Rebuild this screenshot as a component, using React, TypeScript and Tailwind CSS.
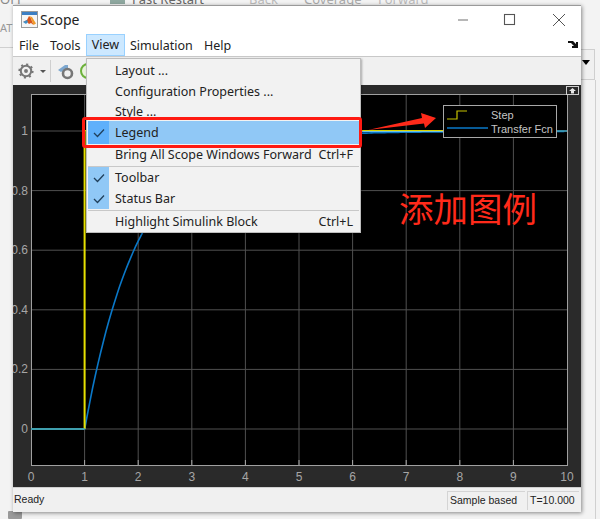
import React from "react";

const ui = { fontFamily: '"Noto Sans", "Liberation Sans", sans-serif' };
const arial = { fontFamily: '"Liberation Sans", Arial, sans-serif' };

function MatlabLogo() {
  return (
    <svg width="17" height="17" viewBox="0 0 17 17" className="block">
      <rect x="0.5" y="0.5" width="16" height="16" fill="#f6f6f6" stroke="#9a9a9a" />
      <rect x="1" y="1" width="15" height="3" fill="#3c7fc4" />
      <path d="M2 11 L6 9 L8 5 L10 7.5 L12.5 14 L10 12 L8 13 L6 11 Z" fill="#d9541e" />
      <path d="M8 5 L10 7.5 L12.5 14 L15 12.5 L11 6 Z" fill="#f09a2a" />
      <path d="M2 11 L6 9 L7 11 L5 13 Z" fill="#3f8fc7" />
    </svg>
  );
}

function Gear({ size = 18, color = "#777" }: { size?: number; color?: string }) {
  return (
    <svg width={size} height={size} viewBox="0 0 20 20" className="block">
      <circle cx="10" cy="10" r="6.5" fill="none" stroke={color} strokeWidth="2.5" />
      <circle cx="10" cy="10" r="8.3" fill="none" stroke={color} strokeWidth="2.4" strokeDasharray="2.6 3.9" />
      <circle cx="10" cy="10" r="2.4" fill={color} />
    </svg>
  );
}

function Check() {
  return (
    <svg width="12" height="10" viewBox="0 0 12 10" className="block">
      <path d="M1 5 L4.5 8.5 L11 1.5" fill="none" stroke="#20405c" strokeWidth="1.3" />
    </svg>
  );
}

function MenuItem({
  label,
  shortcut,
  checked,
  active,
  h = 21,
}: {
  label: string;
  shortcut?: string;
  checked?: boolean;
  active?: boolean;
  h?: number;
}) {
  return (
    <div className={`flex items-center ${active ? "bg-[#90c8f6]" : ""}`} style={{ height: h }}>
      <div
        className={`w-[21px] h-full shrink-0 flex items-center justify-center ${
          active ? "bg-[#5fb0fb]" : checked ? "bg-[#90c8f6]" : ""
        }`}
      >
        {checked && <Check />}
      </div>
      <div className="ml-[6px] pt-[2px] flex-1 text-[12.5px] leading-none text-[#222] whitespace-nowrap">{label}</div>
      {shortcut && <div className="mr-[6px] pt-[2px] text-[12.5px] leading-none text-[#222] whitespace-nowrap">{shortcut}</div>}
    </div>
  );
}

function Separator({ h }: { h: number }) {
  return (
    <div className="flex items-center" style={{ height: h }}>
      <div className="h-px w-full bg-[#c8c8c8]" />
    </div>
  );
}

function Chart() {
  const X = (t: number) => 18 + t * 53.6;
  const Y = (v: number) => 344 - v * 298;
  const xs = [1, 2, 3, 4, 5, 6, 7, 8, 9];
  const ys = [0, 0.2, 0.4, 0.6, 0.8, 1];
  const curve: string[] = [];
  for (let t = 1; t <= 10; t += 0.05) {
    curve.push(`${X(t).toFixed(1)},${(Y(1 - Math.exp(-(t - 1))) + 0.5).toFixed(1)}`);
  }
  return (
    <svg width="568" height="402" viewBox="0 0 568 402" className="block" style={arial}>
      <rect x="18" y="9" width="536" height="371" fill="#000" />
      {xs.map((t) => (
        <line key={t} x1={X(t)} x2={X(t)} y1="9" y2="380" stroke="#505050" strokeWidth="1" />
      ))}
      {ys.map((v) => (
        <line key={v} x1="18" x2="554" y1={Y(v)} y2={Y(v)} stroke="#505050" strokeWidth="1" />
      ))}
      {xs.map((t) => (
        <line key={`tb${t}`} x1={X(t)} x2={X(t)} y1="375" y2="380" stroke="#a8a8a8" />
      ))}
      <rect x="18.5" y="9.5" width="536" height="371" fill="none" stroke="#a0a0a0" strokeWidth="1" />
      <polyline points={curve.join(" ")} fill="none" stroke="#0a78c8" strokeWidth="1.6" />
      <line x1={X(1)} x2={X(1)} y1={Y(0)} y2={Y(1)} stroke="#e6e000" strokeWidth="2" />
      <line x1={X(1)} x2="431" y1={Y(1) - 0.5} y2={Y(1) - 0.5} stroke="#d8d400" strokeWidth="1" />
      <line x1="300" x2="431" y1={Y(1) + 0.5} y2={Y(1) + 0.5} stroke="#6fc0e0" strokeWidth="1" />
      <line x1="530" x2="554" y1={Y(1)} y2={Y(1)} stroke="#3f9fb8" strokeWidth="1.6" />
      <line x1="18" x2={X(1)} y1={Y(0)} y2={Y(0)} stroke="#3f9fae" strokeWidth="1.8" />
      {[0, 1, 2, 3, 4, 5, 6, 7, 8, 9, 10].map((t) => (
        <text key={t} x={X(t)} y="396" fill="#a6a6a6" fontSize="12" textAnchor="middle">
          {t}
        </text>
      ))}
      {ys.map((v) => (
        <text key={`y${v}`} x="15" y={Y(v) + 4} fill="#a6a6a6" fontSize="12" textAnchor="end">
          {v}
        </text>
      ))}
      <g>
        <rect x="553.5" y="1.5" width="12" height="8" fill="#2a2a2a" stroke="#cfcfcf" />
        <path d="M559.5 3 L563 6 L561 6 L561 8.5 L558 8.5 L558 6 L556 6 Z" fill="#e8e8e8" />
      </g>
    </svg>
  );
}

export default function App() {
  return (
    <div className="relative w-[600px] h-[519px] overflow-hidden bg-[#f3f3f3]" style={ui}>
      {/* desktop behind the scope window */}
      <div className="absolute left-0 top-0 w-[600px] h-[5px] overflow-hidden">
        <div className="absolute left-[110px] top-0 w-[15px] h-[4px] bg-[#8fa8a0]" />
        <div className="absolute left-[132px] top-[-7px] text-[13px] leading-[13px] text-[#666] whitespace-nowrap">Fast Restart</div>
        <div className="absolute left-[249px] top-[-7px] text-[13px] leading-[13px] text-[#bbb] whitespace-nowrap">Back</div>
        <div className="absolute left-[304px] top-[-7px] text-[13px] leading-[13px] text-[#aaa] whitespace-nowrap">Coverage</div>
        <div className="absolute left-[378px] top-[-7px] text-[13px] leading-[13px] text-[#bbb] whitespace-nowrap">Forward</div>
        <div className="absolute left-0 top-[-7px] text-[13px] leading-[13px] text-[#888]">OFF</div>
      </div>
      <div className="absolute left-0 top-[20px] text-[11px] text-[#999]">AT</div>
      <div className="absolute left-0 top-[47px] w-[13px] h-px bg-[#d0d0d0]" />
      <div className="absolute left-[581px] top-[49px] w-[14px] h-[31px] border border-l-0 border-[#cfcfcf] bg-[#f0f0f0]" />
      <div className="absolute left-[582px] top-[60px] w-0 h-0 border-x-[4px] border-x-transparent border-t-[5px] border-t-black" />
      <div className="absolute left-[595px] top-[80px] w-px h-[439px] bg-[#d0d0d0]" />
      <div className="absolute left-[8px] top-[511px] w-[14px] h-[8px] bg-[#9a9a9a] rounded-[1px]" />

      {/* scope window */}
      <div className="absolute left-[13px] top-[5px] w-[568px] h-[507px] flex flex-col bg-white shadow-[1px_1px_4px_rgba(0,0,0,0.45)]">
        <div className="h-[29px] shrink-0 flex items-center pl-[8px] pb-[2px] bg-white border-t border-[#9a9a9a]">
          <MatlabLogo />
          <span className="ml-[2px] text-[14px] text-[#222]">Scope</span>
          <div className="flex-1" />
          <svg width="568" height="29" viewBox="0 0 568 29" className="absolute left-0 top-0 pointer-events-none">
            <line x1="445" x2="455" y1="15" y2="15" stroke="#888" strokeWidth="1.2" />
            <rect x="491.5" y="9.5" width="10" height="10" fill="none" stroke="#555" strokeWidth="1.1" />
            <path d="M540 9 L552 21 M552 9 L540 21" stroke="#555" strokeWidth="1" />
          </svg>
        </div>
        <div className="h-[23px] shrink-0 flex items-stretch bg-white border-b border-[#c8c8c8] relative text-[12.5px] text-[#222]">
          <span className="ml-[6px] pt-[2px] flex items-center w-[31px]">File</span>
          <span className="pt-[2px] flex items-center w-[36px]">Tools</span>
          <span className="pt-[1px] flex items-center w-[39px] justify-center bg-[#cce8ff] border border-[#99d1ff]">View</span>
          <span className="ml-[5px] pt-[2px] flex items-center w-[74px]">Simulation</span>
          <span className="pt-[2px] flex items-center">Help</span>
          <svg width="10" height="8" viewBox="0 0 10 8" className="absolute right-[3px] top-[7px]">
            <path d="M0 0 L5 0 L8 3 L8 1 L10 1 L10 7 L4 7 L4 5 L6 5 L3 2 L0 2 Z" fill="#111" />
          </svg>
        </div>
        <div className="h-[28px] shrink-0 flex items-center bg-[#f0f0f0] pl-[5px]">
          <Gear size={16} />
          <div className="ml-[6px] w-0 h-0 border-x-[3px] border-x-transparent border-t-[3px] border-t-[#555]" />
          <div className="ml-[4px] w-px h-[22px] bg-[#cfcfcf]" />
          <div className="ml-[6px] relative w-[17px] h-[17px]">
            <svg width="17" height="17" viewBox="0 0 17 17" className="block">
              <path d="M1 7 L8 2 L11 2 L11 5 L4 9 Z" fill="#7da7cf" />
              <circle cx="10.5" cy="10.5" r="4.5" fill="none" stroke="#777" strokeWidth="2.6" />
            </svg>
          </div>
          <svg width="9" height="18" viewBox="0 0 9 18" className="ml-[5px] block">
            <circle cx="9" cy="9" r="7" fill="#e8f3dc" stroke="#6cb13a" strokeWidth="2" />
          </svg>
        </div>
        <div className="h-[402px] shrink-0 bg-[#2a2a2a] relative">
          <Chart />
        </div>
        <div className="flex-1 flex items-center bg-[#f0f0f0] border-t border-[#cfcfcf] text-[10.5px] text-[#222] whitespace-nowrap" style={arial}>
          <span className="ml-px flex-1">Ready</span>
          <span className="w-[78px] h-[19px] flex items-center pl-[2px] border-l border-t border-[#d4d4d4]">Sample based</span>
          <span className="ml-[2px] mr-[2px] w-[52px] h-[19px] flex items-center pl-[2px] border-l border-t border-[#d4d4d4]">T=10.000</span>
        </div>
      </div>

      {/* legend over the plot */}
      <div className="absolute left-[443px] top-[105px] w-[114px] h-[33px] bg-black border border-[#a8a8a8] text-[11px] text-[#c4c4c4]" style={arial}>
        <svg width="42" height="31" viewBox="0 0 42 31" className="absolute left-[3px] top-0">
          <path d="M0 13 L10 13 L10 5 L20 5" fill="none" stroke="#c8c400" strokeWidth="1.2" />
          <line x1="0" x2="41" y1="22" y2="22" stroke="#0a78c8" strokeWidth="1.3" />
        </svg>
        <div className="absolute left-[47px] top-[3px] leading-[13px]">Step</div>
        <div className="absolute left-[47px] top-[17px] leading-[13px] whitespace-nowrap">Transfer Fcn</div>
      </div>

      {/* View menu */}
      <div className="absolute left-[86px] top-[58px] w-[275px] h-[175px] pt-px px-px bg-[#f2f2f2] border border-[#bdbdbd] shadow-[1px_1px_2px_rgba(0,0,0,0.3)]">
        <MenuItem label="Layout ..." />
        <MenuItem label="Configuration Properties ..." />
        <MenuItem label="Style ..." h={19} />
        <MenuItem label="Legend" checked active h={23} />
        <MenuItem label="Bring All Scope Windows Forward" shortcut="Ctrl+F" h={21} />
        <Separator h={2} />
        <MenuItem label="Toolbar" checked />
        <MenuItem label="Status Bar" checked />
        <Separator h={2} />
        <MenuItem label="Highlight Simulink Block" shortcut="Ctrl+L" h={20} />
      </div>

      {/* annotations */}
      <div className="absolute left-[82px] top-[117px] w-[280px] h-[31px] border-[3px] border-[#ff1a12] rounded-[3px]" />
      <svg width="80" height="24" viewBox="0 0 80 24" className="absolute left-[362px] top-[110px]">
        <path d="M6 20 L60 8 L59 3 L74 8 L63 18 L62 13.5 Z" fill="#ff2a1a" />
      </svg>
      <div
        className="absolute left-[399px] top-[183px] text-[34.5px] leading-[48px] text-[#ff2a1a] whitespace-nowrap"
        style={{ fontFamily: '"Noto Sans CJK SC", sans-serif', fontWeight: 400 }}
      >
        添加图例
      </div>
    </div>
  );
}
